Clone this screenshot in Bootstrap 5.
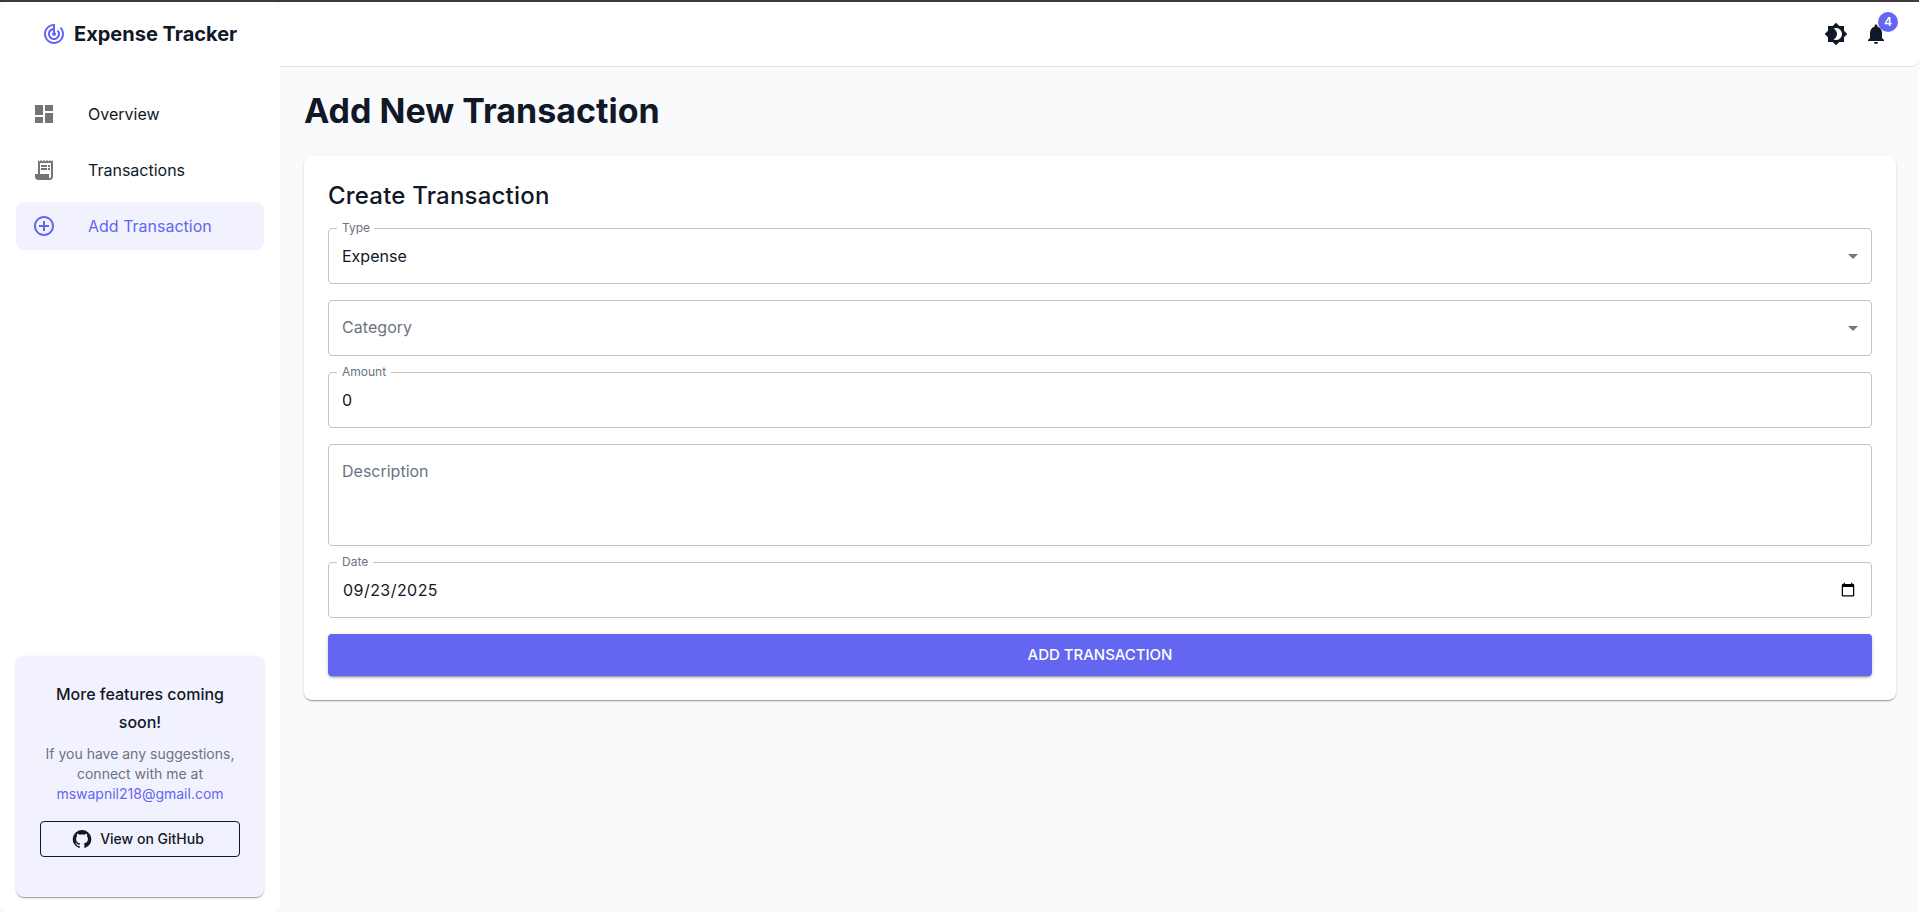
<!DOCTYPE html>
<html lang="en">
<head>
<meta charset="utf-8">
<meta name="viewport" content="width=device-width, initial-scale=1">
<title>Expense Tracker</title>
<link href="https://cdn.jsdelivr.net/npm/bootstrap@5.3.0/dist/css/bootstrap.min.css" rel="stylesheet">
<style>
  :root { --accent: #6366f1; --ink: #111827; --muted: #6b7280; --tint: #f2f2fe; }
  body { font-family: Inter, Roboto, "Liberation Sans", sans-serif; color: var(--ink); background: #f9fafc; }
  .app-shell { border-top: 2px solid #3c3c3c; overflow: hidden; }
  .icon { width: 24px; height: 24px; fill: currentColor; flex: none; display: block; }
  .accent { color: var(--accent); }
  .shadow-thin { box-shadow: 0 2px 1px -1px rgba(0,0,0,.2), 0 1px 1px 0 rgba(0,0,0,.14), 0 1px 3px 0 rgba(0,0,0,.12); }

  .sidebar { width: 280px; flex: none; border-radius: 8px; }
  .brand { height: 64px; padding-left: 42px; gap: 8px; font-size: 20px; font-weight: 700; }
  .side-nav { padding: 24px 16px 0; gap: 8px; }
  .side-nav .nav-link { height: 48px; padding: 0 16px; gap: 32px; color: var(--ink); border-radius: 8px; font-size: 16px; }
  .side-nav .icon { color: #757575; }
  .side-nav .active, .side-nav .active .icon { color: var(--accent); }
  .side-nav .active { background: var(--tint); }

  .promo { margin: 0 16px 15px; padding: 24px 24px 40px; background: var(--tint); border-radius: 8px; }
  .promo h2 { font-size: 16px; font-weight: 500; line-height: 28px; margin-bottom: 8px; }
  .promo p { font-size: 14px; line-height: 20px; color: var(--muted); margin-bottom: 17px; }
  .btn-repo { height: 36px; border: 1px solid var(--ink); border-radius: 4px; color: var(--ink); font-size: 14px; font-weight: 500; line-height: 20px; padding: 0 4px 1px 0; gap: 8px; }
  .btn-repo .icon { width: 20px; height: 20px; }

  .topbar { height: 65px; padding-right: 31px; gap: 16px; border-bottom: 1px solid #e0e2e6; border-radius: 0 0 8px 0; }
  .count { top: -10px; left: 14px; width: 20px; height: 20px; padding: 0; line-height: 20px; font-size: 12px; font-weight: 600; background: var(--accent); }

  .content { padding: 23px 23px 24px 24px; }
  .content h1 { font-size: 34px; font-weight: 700; line-height: 42px; margin-bottom: 24px; }
  .panel { padding: 24px; border-radius: 8px; }
  .panel h2 { font-size: 24px; font-weight: 500; line-height: 32px; letter-spacing: .2px; margin-bottom: 16px; }
  .fields { gap: 16px; }
  .fields .form-control, .fields .form-select { height: 56px; padding: 0 13px; font-size: 16px; line-height: 23px; color: var(--ink); background: #fff; border: 1px solid #c4c4c4; border-radius: 4px; }
  .fields textarea.form-control { height: 102px; padding: 14.5px 13px; resize: none; }
  .fields .form-control[type=date] { padding-left: 14px; letter-spacing: .45px; }
  .fields .form-select.unset { padding-bottom: 2px; letter-spacing: .05px; }
  .fields ::placeholder, .fields .form-select.unset { color: var(--muted); }
  .float-tag { top: -9px; left: 9px; padding: 0 5px; background: #fff; font-size: 12px; line-height: 17px; color: var(--muted); }
  .caret { top: 16px; right: 7px; color: #757575; pointer-events: none; }
  .btn-submit { height: 42px; background: var(--accent); color: #fff; border: 0; border-radius: 4px; font-size: 15px; font-weight: 500; letter-spacing: -.03px; padding: 0; box-shadow: 0 3px 1px -2px rgba(0,0,0,.2), 0 2px 2px 0 rgba(0,0,0,.14), 0 1px 5px 0 rgba(0,0,0,.12); }
</style>
</head>
<body>
<div class="app-shell d-flex vh-100">
  <aside class="sidebar bg-white d-flex flex-column">
    <div class="brand d-flex align-items-center">
      <svg class="icon accent" viewBox="0 0 24 24"><path d="m19.07 4.93-1.41 1.41C19.1 7.79 20 9.79 20 12c0 4.42-3.58 8-8 8s-8-3.58-8-8c0-4.08 3.05-7.44 7-7.93v2.02C8.16 6.57 6 9.03 6 12c0 3.31 2.69 6 6 6s6-2.69 6-6c0-1.66-.67-3.16-1.76-4.24l-1.41 1.41C15.55 9.9 16 10.9 16 12c0 2.21-1.79 4-4 4s-4-1.79-4-4c0-1.86 1.28-3.41 3-3.86v2.14c-.6.35-1 .98-1 1.72 0 1.1.9 2 2 2s2-.9 2-2c0-.74-.4-1.38-1-1.72V2h-1C6.48 2 2 6.48 2 12s4.48 10 10 10 10-4.48 10-10c0-2.76-1.12-5.26-2.93-7.07z"/></svg>
      <span>Expense Tracker</span>
    </div>
    <nav class="side-nav nav flex-column">
      <a class="nav-link d-flex align-items-center" href="#">
        <svg class="icon" viewBox="0 0 24 24"><path d="M3 13h8V3H3v10zm0 8h8v-6H3v6zm10 0h8V11h-8v10zm0-18v6h8V3h-8z"/></svg>
        <span>Overview</span>
      </a>
      <a class="nav-link d-flex align-items-center" href="#">
        <svg class="icon" viewBox="0 0 24 24"><path d="M19.5 3.5 18 2l-1.5 1.5L15 2l-1.5 1.5L12 2l-1.5 1.5L9 2 7.5 3.5 6 2v14H3v3c0 1.66 1.34 3 3 3h12c1.66 0 3-1.34 3-3V2l-1.5 1.5zM19 19c0 .55-.45 1-1 1s-1-.45-1-1v-3H8V5h11v14z"/><path d="M9 7h6v2H9zm7 0h2v2h-2zm-7 3h6v2H9zm7 0h2v2h-2z"/></svg>
        <span>Transactions</span>
      </a>
      <a class="nav-link active d-flex align-items-center" href="#">
        <svg class="icon" viewBox="0 0 24 24"><path d="M13 7h-2v4H7v2h4v4h2v-4h4v-2h-4V7zm-1-5C6.48 2 2 6.48 2 12s4.48 10 10 10 10-4.48 10-10S17.52 2 12 2zm0 18c-4.41 0-8-3.59-8-8s3.59-8 8-8 8 3.59 8 8-3.59 8-8 8z"/></svg>
        <span>Add Transaction</span>
      </a>
    </nav>
    <section class="promo shadow-thin text-center mt-auto">
      <h2>More features coming soon!</h2>
      <p>If you have any suggestions, connect with me at <a class="accent text-decoration-none" href="#">mswapnil218@gmail.com</a></p>
      <a class="btn btn-repo d-flex align-items-center justify-content-center" href="#">
        <svg class="icon" viewBox="0 0 24 24"><path d="M12 1.27a11 11 0 00-3.48 21.46c.55.09.73-.28.73-.55v-1.84c-3.03.64-3.67-1.46-3.67-1.46-.55-1.29-1.28-1.65-1.28-1.65-.92-.65.1-.65.1-.65 1.1 0 1.73 1.1 1.73 1.1.92 1.65 2.57 1.2 3.21.92a2 2 0 01.64-1.47c-2.47-.27-5.04-1.19-5.04-5.5 0-1.1.46-2.1 1.2-2.84a3.76 3.76 0 010-2.93s.91-.28 3.11 1.1c1.8-.49 3.7-.49 5.5 0 2.1-1.38 3.02-1.1 3.02-1.1a3.76 3.76 0 01.1 2.93c.83.74 1.2 1.74 1.2 2.94 0 4.21-2.57 5.13-5.04 5.4.45.37.82.92.82 2.02v3.03c0 .27.1.64.73.55A11 11 0 0012 1.27"/></svg>
        <span>View on GitHub</span>
      </a>
    </section>
  </aside>

  <div class="flex-grow-1">
    <header class="topbar bg-white d-flex align-items-center justify-content-end">
      <svg class="icon" viewBox="0 0 24 24"><path d="M20 8.69V4h-4.69L12 .69 8.69 4H4v4.69L.69 12 4 15.31V20h4.69L12 23.31 15.31 20H20v-4.69L23.31 12 20 8.69zM12 18c-.89 0-1.74-.2-2.5-.55C11.56 16.5 13 14.42 13 12s-1.44-4.5-3.5-5.45C10.26 6.2 11.11 6 12 6c3.31 0 6 2.69 6 6s-2.69 6-6 6z"/></svg>
      <div class="position-relative">
        <svg class="icon" viewBox="0 0 24 24"><path d="M12 22c1.1 0 2-.9 2-2h-4c0 1.1.89 2 2 2zm6-6v-5c0-3.07-1.64-5.64-4.5-6.32V4c0-.83-.67-1.5-1.5-1.5s-1.5.67-1.5 1.5v.68C7.63 5.36 6 7.92 6 11v5l-2 2v1h16v-1l-2-2z"/></svg>
        <span class="count badge rounded-circle position-absolute">4</span>
      </div>
    </header>

    <main class="content">
      <h1>Add New Transaction</h1>
      <section class="panel bg-white shadow-thin">
        <h2>Create Transaction</h2>
        <form class="fields d-flex flex-column">
          <div class="position-relative">
            <select class="form-select" id="type"><option>Expense</option></select>
            <label class="float-tag position-absolute" for="type">Type</label>
            <svg class="icon caret position-absolute" viewBox="0 0 24 24"><path d="m7 10 5 5 5-5z"/></svg>
          </div>
          <div class="position-relative">
            <select class="form-select unset" aria-label="Category"><option>Category</option></select>
            <svg class="icon caret position-absolute" viewBox="0 0 24 24"><path d="m7 10 5 5 5-5z"/></svg>
          </div>
          <div class="position-relative">
            <input class="form-control" id="amount" type="text" inputmode="decimal" value="0">
            <label class="float-tag position-absolute" for="amount">Amount</label>
          </div>
          <textarea class="form-control" placeholder="Description"></textarea>
          <div class="position-relative">
            <input class="form-control" id="date" type="date" value="2025-09-23">
            <label class="float-tag position-absolute" for="date">Date</label>
          </div>
          <button class="btn btn-submit text-uppercase" type="button">Add Transaction</button>
        </form>
      </section>
    </main>
  </div>
</div>
<script src="https://cdn.jsdelivr.net/npm/bootstrap@5.3.0/dist/js/bootstrap.bundle.min.js"></script>
</body>
</html>
